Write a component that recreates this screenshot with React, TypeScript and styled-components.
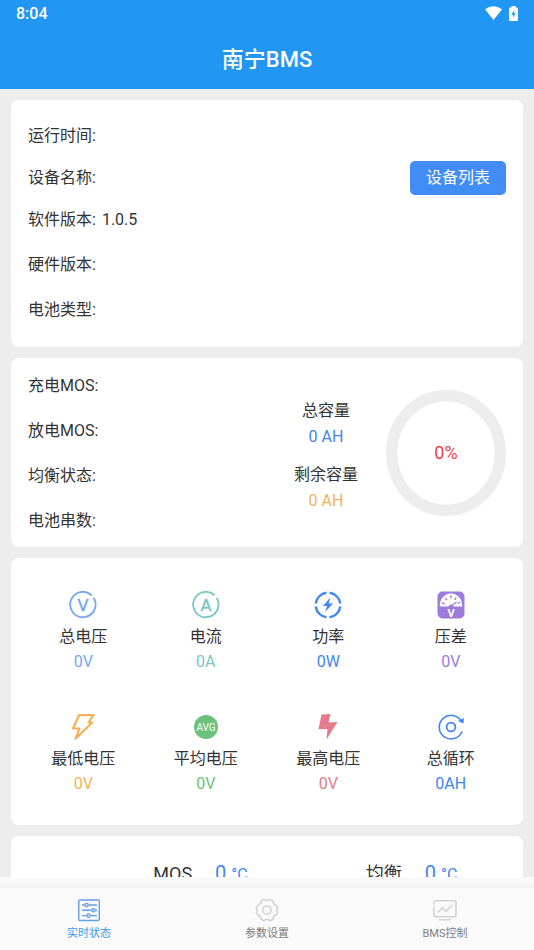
import React from "react";
import styled, { createGlobalStyle } from "styled-components";

const Global = createGlobalStyle`
  *, *::before, *::after { box-sizing: border-box; }
  html, body, #root { height: 100%; margin: 0; }
  body {
    background: #ededed;
    color: #333;
    font-family: Roboto, "Noto Sans CJK SC", sans-serif;
    font-size: 16px;
    line-height: 24px;
  }
`;

const Screen = styled.div`
  display: flex;
  flex-direction: column;
  height: 100vh;
`;

const Header = styled.header`
  flex: none;
  background: #2196f3;
  color: #fff;
`;

const StatusBar = styled.div`
  display: flex;
  align-items: center;
  justify-content: space-between;
  height: 28px;
  padding: 0 16px;
  font-weight: 500;
`;

const StatusIcons = styled.div`
  display: flex;
  align-items: center;
  gap: 7px;
  padding-bottom: 2px;
`;

const Title = styled.h1`
  margin: 0;
  padding: 16px 0 13px;
  font-size: 22px;
  font-weight: 500;
  line-height: 32px;
  text-align: center;
`;

const Content = styled.main`
  flex: 1;
  min-height: 0;
  overflow-y: auto;
  scrollbar-width: none;
  padding: 11px;
  display: flex;
  flex-direction: column;
  gap: 11px;
`;

const Card = styled.section`
  flex: none;
  background: #fff;
  border-radius: 8px;
`;

const InfoCard = styled(Card)`
  padding: 13px 17px 15px;
`;

const Row = styled.div<{ $compact?: boolean }>`
  display: flex;
  align-items: center;
  gap: 6px;
  height: ${(p) => (p.$compact ? 39 : 45)}px;
`;

const DeviceButton = styled.button`
  margin-left: auto;
  padding: 5px 16px;
  border: 0;
  border-radius: 5px;
  background: #428df5;
  color: #fff;
  font: inherit;
  cursor: pointer;
`;

const BatteryCard = styled(Card)`
  display: flex;
  align-items: center;
  gap: 28px;
  padding: 5px 17px 4px;
`;

const StateList = styled.div`
  flex: 1;
`;

const Capacity = styled.div`
  display: flex;
  flex-direction: column;
  gap: 12px;
  padding-top: 5px;
  text-align: center;
  line-height: 26px;
`;

const Value = styled.div<{ $color: string }>`
  color: ${(p) => p.$color};
`;

const Gauge = styled.div`
  display: grid;
  place-items: center;
  color: #ee3f3f;
  font-size: 18px;

  > * {
    grid-area: 1 / 1;
  }
`;

const Metrics = styled(Card)`
  display: grid;
  grid-template-columns: repeat(4, 1fr);
  row-gap: 39px;
  padding: 33px 11px 29px;
`;

const Metric = styled.div`
  display: flex;
  flex-direction: column;
  align-items: center;
  line-height: 25px;

  svg {
    margin-bottom: 5px;
  }
`;

const Temperatures = styled(Card)`
  display: grid;
  grid-template-columns: 1fr 1fr;
  padding: 22px 6px 22px 84px;
`;

const Temperature = styled.div`
  display: flex;
  align-items: baseline;
  justify-content: center;
  gap: 23px;
  font-size: 18px;
  line-height: 30px;
`;

const Degrees = styled.span`
  color: #4285f4;
  font-size: 20px;

  small {
    font-size: 16px;
  }
`;

const TabBar = styled.nav`
  flex: none;
  background: #fafafa;

  &::before {
    content: "";
    display: block;
    height: 11px;
    background: linear-gradient(#f9f9f9 50%, #f1f1f1);
  }
`;

const Tabs = styled.div`
  display: grid;
  grid-template-columns: repeat(3, 1fr);
`;

const Tab = styled.a<{ $active?: boolean }>`
  display: flex;
  flex-direction: column;
  align-items: center;
  gap: 4px;
  padding: 10px 0 8px;
  color: ${(p) => (p.$active ? "#3a98e8" : "#7d7d7d")};
  font-size: 11px;
  line-height: 16px;
  text-decoration: none;
`;

const Icon = ({ size = 28, children }: { size?: number; children: React.ReactNode }) => (
  <svg width={size} height={size} viewBox={`0 0 ${size} ${size}`} fill="none" aria-hidden="true">
    {children}
  </svg>
);

const BLUE = "#4285f4";

const LetterRing = ({ color, letter }: { color: string; letter: string }) => (
  <Icon>
    <path d="M22.2 4A12.7 12.7 0 1 0 25 7.5" stroke={color} strokeWidth="1.8" strokeLinecap="round" />
    <text
      x="14"
      y="20"
      fill={color}
      stroke={color}
      strokeWidth="0.4"
      fontFamily="'DejaVu Sans', sans-serif"
      fontSize="16"
      textAnchor="middle"
    >
      {letter}
    </text>
  </Icon>
);

const PowerIcon = () => (
  <Icon>
    <g stroke={BLUE} strokeWidth="2.4">
      <path d="M15.5 1.7A12.4 12.4 0 0 1 26.3 12.5" />
      <path d="M26.3 15.5A12.4 12.4 0 0 1 15.5 26.3" />
      <path d="M12.5 26.3A12.4 12.4 0 0 1 1.7 15.5" />
      <path d="M1.7 12.5A12.4 12.4 0 0 1 12.5 1.7" />
    </g>
    <path d="M16.2 6.5 9 15h4.2l-2.4 6.3 8.3-8.7h-4.4z" fill={BLUE} />
  </Icon>
);

const DiffIcon = () => (
  <Icon>
    <rect x="0.5" y="0.5" width="27" height="27" rx="5" fill="#9b7bdc" />
    <path d="M2.8 15.5C2.5 8 7.500 2.500 14 2.500S25.500 8 25.200 15.500H16.500a2.600 2.600 0 0 0-5 0z" fill="#fff" />
    <path
      d="M4.800 11.800l3 1M8.200 6.800l1.900 2.400M14 4.300v3M19.300 6.300l-1.600 2.500M23.200 11.300l-2.800 1.200M13.500 15.500l6-4.500"
      stroke="#9b7bdc"
      strokeWidth="1.3"
    />
    <text x="14" y="25.500" fill="#fff" fontSize="11" fontWeight="700" textAnchor="middle">
      V
    </text>
  </Icon>
);

const LowIcon = () => (
  <Icon>
    <path d="M10 2.200h14.500l-5 7.300h3.700L6.500 25.800l4-10.300H4z" stroke="#f2b25a" strokeWidth="2.200" strokeLinejoin="round" />
  </Icon>
);

const AverageIcon = () => (
  <Icon>
    <circle cx="14" cy="14" r="12" fill="#6cc27a" />
    <text x="14" y="17.500" fill="#fff" fontSize="10" textAnchor="middle">
      AVG
    </text>
  </Icon>
);

const HighIcon = () => (
  <Icon>
    <path d="M7.500 1.500 16.500 1l-2 8.500 9-.5L12.500 26.500 13.500 16 4.500 16.300z" fill="#e67a8c" />
  </Icon>
);

const CycleIcon = () => (
  <Icon>
    <path d="M24.300 8.300A11.800 11.800 0 1 0 24.800 19" stroke={BLUE} strokeWidth="1.600" strokeLinecap="round" />
    <path d="m21 8 5.800-3-.3 5.500z" fill={BLUE} />
    <circle cx="14" cy="14" r="4.400" stroke={BLUE} strokeWidth="1.800" />
  </Icon>
);

const StatusTabIcon = () => (
  <Icon size={24}>
    <g stroke="#639fec" strokeWidth="1.400">
      <rect x="1.800" y="2" width="20.500" height="20.500" rx="1" />
      <path d="M5 7h2.500M11.500 7H20M5 12.300h9.500M18.500 12.300H20M5 17.600h4.500M13.500 17.600H20" />
      <circle cx="9.500" cy="7" r="1.600" />
      <circle cx="16.500" cy="12.300" r="1.600" />
      <circle cx="11.500" cy="17.600" r="1.600" />
    </g>
  </Icon>
);

const SettingsTabIcon = () => (
  <Icon size={24}>
    <g stroke="#d2d2d2" strokeWidth="1.500" strokeLinejoin="round">
      <path d="M8.800 1.400Q12 4 15.200 1.400L18 3Q17.800 6.500 21.200 7.200L22.800 9.800Q20.500 12 22.800 14.400L21.200 17Q17.800 17.700 18 21.200L15.200 22.800Q12 20.200 8.800 22.800L6 21.200Q6.200 17.700 2.800 17L1.200 14.400Q3.500 12 1.200 9.800L2.800 7.200Q6.200 6.500 6 3z" />
      <circle cx="12" cy="12.100" r="4.200" />
    </g>
  </Icon>
);

const ControlTabIcon = () => (
  <Icon size={24}>
    <g stroke="#d2d2d2" strokeWidth="1.600" strokeLinecap="round" strokeLinejoin="round">
      <path d="M1 6V4.300a1.500 1.500 0 0 1 1.500-1.500h19a1.500 1.500 0 0 1 1.500 1.500v13a1.500 1.500 0 0 1-1.500 1.500h-19A1.500 1.500 0 0 1 1 17.300V9" />
      <path d="M5.500 14l4-4.500 3.500 4L18.500 7.500M6.500 21.800h11" />
    </g>
  </Icon>
);

const metrics = [
  { label: "总电压", value: "0V", color: "#74a6f5", icon: <LetterRing color="#74a6f5" letter="V" /> },
  { label: "电流", value: "0A", color: "#7cc7c5", icon: <LetterRing color="#7cc7c5" letter="A" /> },
  { label: "功率", value: "0W", color: BLUE, icon: <PowerIcon /> },
  { label: "压差", value: "0V", color: "#9b7bdc", icon: <DiffIcon /> },
  { label: "最低电压", value: "0V", color: "#f2b25a", icon: <LowIcon /> },
  { label: "平均电压", value: "0V", color: "#6cc27a", icon: <AverageIcon /> },
  { label: "最高电压", value: "0V", color: "#e67a8c", icon: <HighIcon /> },
  { label: "总循环", value: "0AH", color: BLUE, icon: <CycleIcon /> },
];

const states = ["充电MOS:", "放电MOS:", "均衡状态:", "电池串数:"];

export default function App() {
  return (
    <Screen>
      <Global />
      <Header>
        <StatusBar>
          <time>8:04</time>
          <StatusIcons>
            <svg width="17" height="14" viewBox="0 0 17 14" fill="#fff" aria-hidden="true">
              <path d="M0 3.300Q8.500-2.800 17 3.300L8.500 14z" />
            </svg>
            <svg width="9" height="15" viewBox="0 0 9 15" aria-hidden="true">
              <path d="M2.500 1.500V0h4v1.500H8q1 0 1 1V14q0 1-1 1H1q-1 0-1-1V2.500q0-1 1-1z" fill="#fff" />
              <path d="M5.300 4 2.300 8.700h2L3.800 12l3-4.700H4.900z" fill="#2196f3" />
            </svg>
          </StatusIcons>
        </StatusBar>
        <Title>南宁BMS</Title>
      </Header>

      <Content>
        <InfoCard>
          <Row>运行时间:</Row>
          <Row $compact>
            设备名称:
            <DeviceButton type="button">设备列表</DeviceButton>
          </Row>
          <Row>
            <span>软件版本:</span>
            <span>1.0.5</span>
          </Row>
          <Row>硬件版本:</Row>
          <Row>电池类型:</Row>
        </InfoCard>

        <BatteryCard>
          <StateList>
            {states.map((state) => (
              <Row key={state}>{state}</Row>
            ))}
          </StateList>
          <Capacity>
            <div>
              <div>总容量</div>
              <Value $color={BLUE}>0 AH</Value>
            </div>
            <div>
              <div>剩余容量</div>
              <Value $color="#f2b25a">0 AH</Value>
            </div>
          </Capacity>
          <Gauge>
            <svg width="120" height="126" viewBox="0 0 120 126" fill="none" aria-hidden="true">
              <ellipse cx="60" cy="63" rx="54.300" ry="57.300" stroke="#ededed" strokeWidth="11.400" />
            </svg>
            <span>0%</span>
          </Gauge>
        </BatteryCard>

        <Metrics>
          {metrics.map((m) => (
            <Metric key={m.label}>
              {m.icon}
              <div>{m.label}</div>
              <Value $color={m.color}>{m.value}</Value>
            </Metric>
          ))}
        </Metrics>

        <Temperatures>
          <Temperature>
            MOS
            <Degrees>
              0 <small>°C</small>
            </Degrees>
          </Temperature>
          <Temperature>
            均衡
            <Degrees>
              0 <small>°C</small>
            </Degrees>
          </Temperature>
        </Temperatures>
      </Content>

      <TabBar>
        <Tabs>
          <Tab href="#status" $active aria-current="page">
            <StatusTabIcon />
            实时状态
          </Tab>
          <Tab href="#settings">
            <SettingsTabIcon />
            参数设置
          </Tab>
          <Tab href="#control">
            <ControlTabIcon />
            BMS控制
          </Tab>
        </Tabs>
      </TabBar>
    </Screen>
  );
}
